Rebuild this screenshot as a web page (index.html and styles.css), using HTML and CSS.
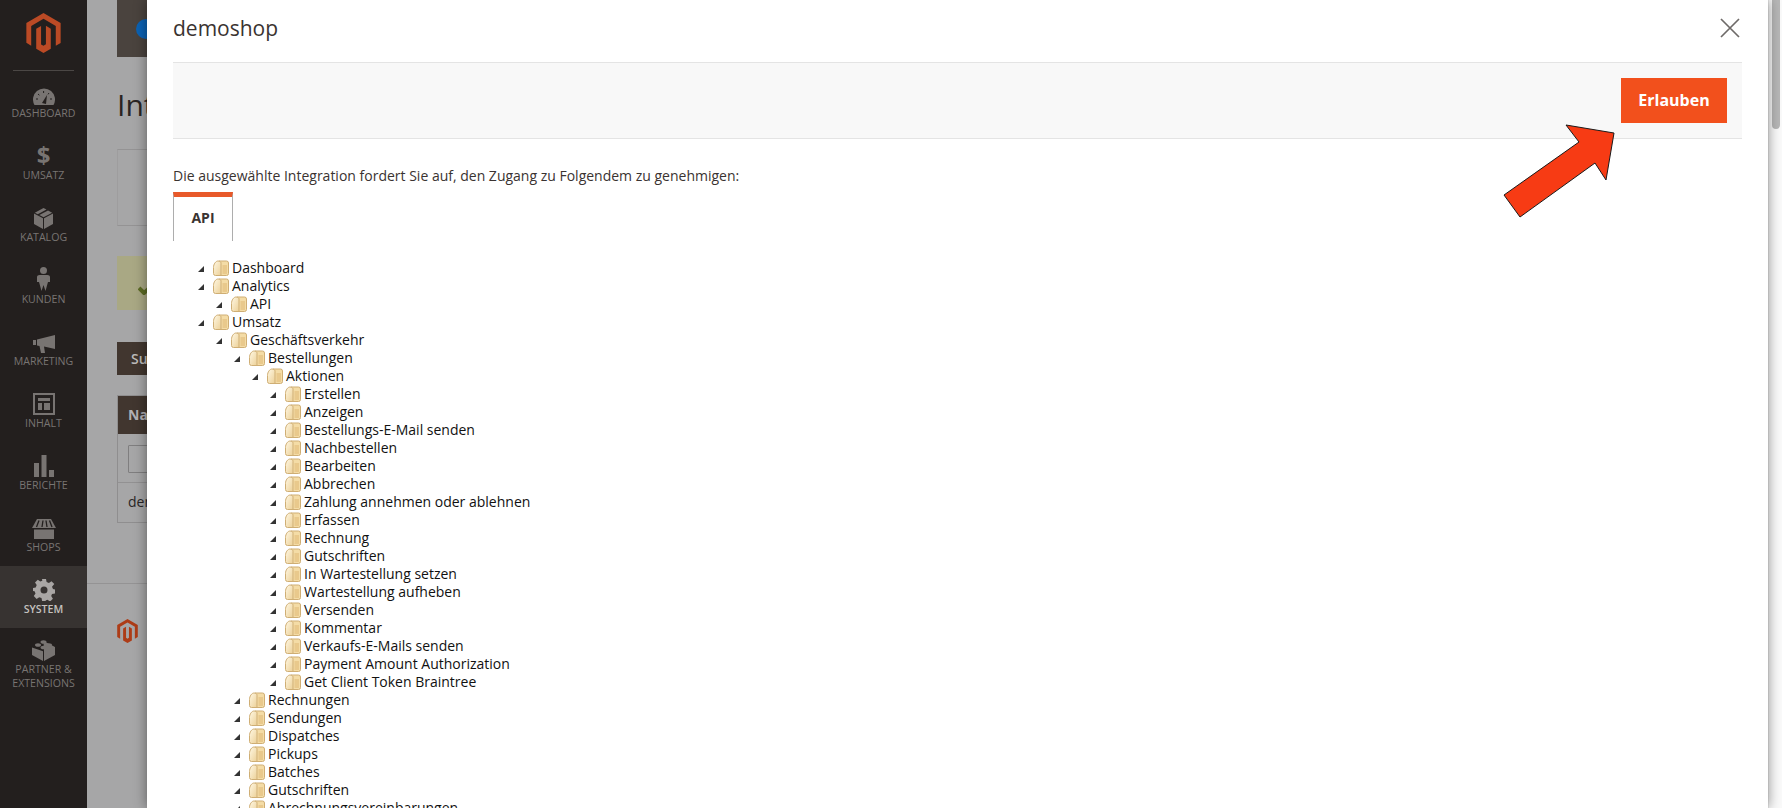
FILE: index.html
```html
<!DOCTYPE html>
<html lang="de">
<head>
<meta charset="utf-8">
<title>demoshop</title>
<link rel="stylesheet" href="styles.css">
</head>
<body>
<svg class="defs" aria-hidden="true">
  <defs>
    <linearGradient id="fold" x1="0" y1="0" x2="1" y2="1">
      <stop offset="0" stop-color="#fff8e4"/>
      <stop offset="1" stop-color="#ecd097"/>
    </linearGradient>
    <symbol id="folder" viewBox="0 0 16 16">
      <path d="M6 1h7.500a2 2 0 0 1 2 2v10.500a2 2 0 0 1-2 2H6z" fill="#f4dca6" stroke="#cfae74"/>
      <path d="M5 1c1.700 0 3 .7 3 2.200V15.500H2.500a2 2 0 0 1-2-2V7.500C.5 4 2.800 1 5 1z" fill="url(#fold)" stroke="#cfae74"/>
      <path d="M9.500 5h4.500v9H9.500z" fill="#e9c98c"/>
    </symbol>
    <symbol id="arrow" viewBox="0 0 6 6">
      <path d="M6 0v6H0z" fill="#333"/>
    </symbol>
  </defs>
</svg>
<div class="app">
  <nav class="sidebar">
    <div class="logo">
      <svg width="35" height="40" viewBox="0 0 24 28"><path class="brand" d="M12 0L0 7v13.900l3.400 2V9.100l8.600-5 8.600 5v13.900l3.400-2V7z"/><path class="brand" d="M13.700 21.900 12 23l-1.700-1V9.100L6.900 11v14.100L12 28l5.100-2.900V11l-3.400-2z"/></svg>
    </div>
    <a class="item">
      <span class="icon"><svg width="22" height="17" viewBox="0 0 22 17"><path d="M1.500 17A11 11 0 1 1 20.500 17z"/><path class="cut" d="M9 15l5-8-1 9z"/><path class="cut" d="M3 11h2M5 6l1.400 1.200M10.600 3v2M16 5l-1 1.400M19 11h-2" stroke="#231f1e" stroke-width="1"/></svg></span>
      <span class="label">Dashboard</span>
    </a>
    <a class="item">
      <span class="icon"><span class="dollar">$</span></span>
      <span class="label">Umsatz</span>
    </a>
    <a class="item">
      <span class="icon"><svg width="19" height="21" viewBox="0 0 19 21"><path d="M9 10.200V21L0 16V5.600z"/><path d="M10 10.200V21l9-5V5.600z"/><path d="M9.500 0l3 1.600L3.800 6.300 .8 4.700z"/><path d="M14 2.400l4.200 2.300-8.700 4.600-4.200-2.300z"/></svg></span>
      <span class="label">Katalog</span>
    </a>
    <a class="item">
      <span class="icon"><svg width="13" height="24" viewBox="0 0 13 24"><circle cx="6.500" cy="3.500" r="3.500"/><path d="M2.500 8h8c1.300 0 2.500.8 2.500 2v5h-2l-1 3.500L8.500 24l-2-6-2 6-1.500-5.500L2 15H0v-5c0-1.200 1.200-2 2.500-2z"/></svg></span>
      <span class="label">Kunden</span>
    </a>
    <a class="item">
      <span class="icon"><svg width="22" height="18" viewBox="0 0 22 18"><path d="M0 5h3v5H0z"/><path d="M4 4.500L22 0v14L11 11.600l1 6.400H8L6.500 11 4 10.500z"/></svg></span>
      <span class="label">Marketing</span>
    </a>
    <a class="item">
      <span class="icon"><svg width="22" height="22" viewBox="0 0 22 22"><path fill-rule="evenodd" d="M0 0h22v22H0zM2 2v18h18V2z"/><path d="M5 5h12v3H5zM5 10h4v7H5zM11 10h6v7h-6z"/></svg></span>
      <span class="label">Inhalt</span>
    </a>
    <a class="item">
      <span class="icon"><svg width="20" height="22" viewBox="0 0 20 22"><path d="M0 8h5v14H0zM7.500 0h5v22h-5zM15 15h5v7h-5z"/></svg></span>
      <span class="label">Berichte</span>
    </a>
    <a class="item">
      <span class="icon"><svg width="24" height="20" viewBox="0 0 24 20"><path d="M5 0h14l5 9H0z"/><path class="cut" d="M7 1.500L4.500 8M11 1.500 10 8M14 1.500 15 8M17.500 1.500 20 8" stroke="#231f1e" stroke-width="1.300" fill="none"/><path d="M2 10.500h20V20H2z"/></svg></span>
      <span class="label">Shops</span>
    </a>
    <a class="item active">
      <span class="icon"><svg width="22" height="22" viewBox="0 0 22 22"><path fill-rule="evenodd" d="M9 0h4l.6 3 2.300 1 2.600-1.700 2.800 2.800L19 7.700l1 2.300 2 .6v4l-3 .5-.8 2 1.700 2.600-2.800 2.800-2.600-1.700-2 .8L12.900 22H9.100l-.6-2.900-2.300-.9-2.600 1.700-2.800-2.800L2.500 14.500l-.9-2.200L0 12V9l2.700-.6 1-2.300L2 3.500 4.800.8l2.500 1.700 2-.8zM11 7.500a3.500 3.500 0 1 0 0 7 3.500 3.500 0 0 0 0-7z"/></svg></span>
      <span class="label">System</span>
    </a>
    <a class="item">
      <span class="icon"><svg width="23" height="22" viewBox="0 0 23 22"><path d="M11.500 2L23 8v8l-11 6V12zM0 8.500l11 3.700V22L0 16z"/><ellipse cx="11.500" cy="3" rx="3" ry="1.800"/><ellipse cx="6" cy="6" rx="3" ry="1.800"/><ellipse cx="17" cy="6" rx="3" ry="1.800"/><ellipse cx="11.500" cy="8.500" rx="3" ry="1.800"/></svg></span>
      <span class="label">Partner &amp; Extensions</span>
    </a>
  </nav>

  <main class="page">
    <div class="topbar"><span class="avatar"></span></div>
    <h1 class="page-title">Integrationen</h1>
    <div class="gridbox"></div>
    <div class="notice"><svg width="18" height="14" viewBox="0 0 18 14"><path d="M1 7l5 5L17 2" fill="none" stroke="#5c6b24" stroke-width="4"/></svg></div>
    <div class="dark-button">Suchen</div>
    <div class="table">
      <div class="thead">Name</div>
      <div class="tfilter"><span class="tinput"></span></div>
      <div class="trow">demoshop</div>
    </div>
    <footer class="page-foot">
      <svg width="21" height="24" viewBox="0 0 24 28"><path class="brand-foot" d="M12 0L0 7v13.900l3.400 2V9.100l8.600-5 8.600 5v13.900l3.400-2V7z"/><path class="brand-foot" d="M13.700 21.900 12 23l-1.700-1V9.100L6.900 11v14.100L12 28l5.100-2.900V11l-3.400-2z"/></svg>
    </footer>
  </main>

  <div class="scrollbar"><span class="thumb"></span></div>
</div>

<section class="modal">
  <header class="modal-head">
    <h2 class="modal-title">demoshop</h2>
    <svg class="close" width="20" height="20" viewBox="0 0 20 20"><path d="M1 1l18 18M19 1L1 19" stroke="#6e6a68" stroke-width="1.700" fill="none"/></svg>
  </header>
  <div class="actions"><button class="allow">Erlauben</button></div>
  <p class="intro">Die ausgewählte Integration fordert Sie auf, den Zugang zu Folgendem zu genehmigen:</p>
  <div class="tabs"><span class="tab">API</span></div>
  <div class="tree">
    <ul>
      <li><div class="node"><svg class="tri"><use href="#arrow"/></svg><svg class="fld"><use href="#folder"/></svg>Dashboard</div></li>
      <li><div class="node"><svg class="tri"><use href="#arrow"/></svg><svg class="fld"><use href="#folder"/></svg>Analytics</div>
        <ul><li><div class="node"><svg class="tri"><use href="#arrow"/></svg><svg class="fld"><use href="#folder"/></svg>API</div></li></ul>
      </li>
      <li><div class="node"><svg class="tri"><use href="#arrow"/></svg><svg class="fld"><use href="#folder"/></svg>Umsatz</div>
        <ul><li><div class="node"><svg class="tri"><use href="#arrow"/></svg><svg class="fld"><use href="#folder"/></svg>Geschäftsverkehr</div>
          <ul>
            <li><div class="node"><svg class="tri"><use href="#arrow"/></svg><svg class="fld"><use href="#folder"/></svg>Bestellungen</div>
              <ul><li><div class="node"><svg class="tri"><use href="#arrow"/></svg><svg class="fld"><use href="#folder"/></svg>Aktionen</div>
                <ul>
                  <li><div class="node"><svg class="tri"><use href="#arrow"/></svg><svg class="fld"><use href="#folder"/></svg>Erstellen</div></li>
                  <li><div class="node"><svg class="tri"><use href="#arrow"/></svg><svg class="fld"><use href="#folder"/></svg>Anzeigen</div></li>
                  <li><div class="node"><svg class="tri"><use href="#arrow"/></svg><svg class="fld"><use href="#folder"/></svg>Bestellungs-E-Mail senden</div></li>
                  <li><div class="node"><svg class="tri"><use href="#arrow"/></svg><svg class="fld"><use href="#folder"/></svg>Nachbestellen</div></li>
                  <li><div class="node"><svg class="tri"><use href="#arrow"/></svg><svg class="fld"><use href="#folder"/></svg>Bearbeiten</div></li>
                  <li><div class="node"><svg class="tri"><use href="#arrow"/></svg><svg class="fld"><use href="#folder"/></svg>Abbrechen</div></li>
                  <li><div class="node"><svg class="tri"><use href="#arrow"/></svg><svg class="fld"><use href="#folder"/></svg>Zahlung annehmen oder ablehnen</div></li>
                  <li><div class="node"><svg class="tri"><use href="#arrow"/></svg><svg class="fld"><use href="#folder"/></svg>Erfassen</div></li>
                  <li><div class="node"><svg class="tri"><use href="#arrow"/></svg><svg class="fld"><use href="#folder"/></svg>Rechnung</div></li>
                  <li><div class="node"><svg class="tri"><use href="#arrow"/></svg><svg class="fld"><use href="#folder"/></svg>Gutschriften</div></li>
                  <li><div class="node"><svg class="tri"><use href="#arrow"/></svg><svg class="fld"><use href="#folder"/></svg>In Wartestellung setzen</div></li>
                  <li><div class="node"><svg class="tri"><use href="#arrow"/></svg><svg class="fld"><use href="#folder"/></svg>Wartestellung aufheben</div></li>
                  <li><div class="node"><svg class="tri"><use href="#arrow"/></svg><svg class="fld"><use href="#folder"/></svg>Versenden</div></li>
                  <li><div class="node"><svg class="tri"><use href="#arrow"/></svg><svg class="fld"><use href="#folder"/></svg>Kommentar</div></li>
                  <li><div class="node"><svg class="tri"><use href="#arrow"/></svg><svg class="fld"><use href="#folder"/></svg>Verkaufs-E-Mails senden</div></li>
                  <li><div class="node"><svg class="tri"><use href="#arrow"/></svg><svg class="fld"><use href="#folder"/></svg>Payment Amount Authorization</div></li>
                  <li><div class="node"><svg class="tri"><use href="#arrow"/></svg><svg class="fld"><use href="#folder"/></svg>Get Client Token Braintree</div></li>
                </ul>
              </li></ul>
            </li>
            <li><div class="node"><svg class="tri"><use href="#arrow"/></svg><svg class="fld"><use href="#folder"/></svg>Rechnungen</div></li>
            <li><div class="node"><svg class="tri"><use href="#arrow"/></svg><svg class="fld"><use href="#folder"/></svg>Sendungen</div></li>
            <li><div class="node"><svg class="tri"><use href="#arrow"/></svg><svg class="fld"><use href="#folder"/></svg>Dispatches</div></li>
            <li><div class="node"><svg class="tri"><use href="#arrow"/></svg><svg class="fld"><use href="#folder"/></svg>Pickups</div></li>
            <li><div class="node"><svg class="tri"><use href="#arrow"/></svg><svg class="fld"><use href="#folder"/></svg>Batches</div></li>
            <li><div class="node"><svg class="tri"><use href="#arrow"/></svg><svg class="fld"><use href="#folder"/></svg>Gutschriften</div></li>
            <li><div class="node"><svg class="tri"><use href="#arrow"/></svg><svg class="fld"><use href="#folder"/></svg>Abrechnungsvereinbarungen</div></li>
          </ul>
        </li></ul>
      </li>
    </ul>
  </div>
  <svg class="callout" width="114" height="96" viewBox="0 0 114 96"><path d="M111 10L63 2l13 17L1 72l16 22 75-54 11 17z" fill="#f73b14" stroke="#1a1a1a" stroke-width="1"/></svg>
</section>
</body>
</html>
```

FILE: styles.css
```css
* { box-sizing: border-box; }
html, body { margin: 0; height: 808px; overflow: hidden; }
body { font-family: "Open Sans", "Noto Sans", sans-serif; background: #a6a6a7; color: #2b2626; }
h1, h2, p, ul { margin: 0; padding: 0; }
ul { list-style: none; }
.defs { width: 0; height: 0; display: block; }

.app { display: flex; height: 808px; }

.sidebar { width: 87px; flex: none; background: #231f1e; display: flex; flex-direction: column; }
.logo { height: 71px; margin: 0 13px -1px; padding-top: 13px; border-bottom: 1px solid #4b4745; display: flex; justify-content: center; align-items: flex-start; }
.brand { fill: #bb4a25; }
.item { height: 62px; padding-top: 5px; display: flex; flex-direction: column; align-items: center; color: #787472; }
.item svg { fill: #787472; display: block; }
.item .cut { fill: #231f1e; }
.icon { height: 30px; display: flex; align-items: flex-end; justify-content: center; }
.dollar { font-size: 24px; line-height: 24px; font-weight: 700; color: #787472; }
.label { margin-top: 1px; font-size: 10.600px; line-height: 14px; text-transform: uppercase; text-align: center; }
.item.active { background: #373331; color: #c4c1bf; }
.item.active svg { fill: #a9a6a4; }
.item.active .label { font-weight: 600; }

.page { flex: 1; min-width: 0; padding-left: 30px; }
.topbar { height: 57px; background: #4a433e; padding-left: 19px; display: flex; align-items: center; }
.avatar { width: 20px; height: 20px; border-radius: 50%; background: #0b62b4; }
.page-title { margin-top: 28px; font-size: 30px; line-height: 40px; font-weight: 400; color: #2a2423; }
.gridbox { margin-top: 24px; height: 77px; border: 1px solid #949394; border-right: 0; border-left-color: #9e9d9e; }
.notice { margin-top: 30px; height: 54px; background: #a9a884; padding: 22px 0 0 21px; }
.dark-button { margin-top: 32px; height: 33px; width: 120px; background: #41362f; color: #bdbbba; font-size: 14px; font-weight: 600; line-height: 33px; padding-left: 14px; }
.table { margin-top: 20px; border: 1px solid #8f8e8f; border-right: 0; font-size: 14px; }
.thead { height: 38px; background: #41362f; color: #b2b0b4; font-weight: 700; line-height: 38px; padding-left: 10px; }
.tfilter { height: 49px; padding: 11px 0 0 10px; border-bottom: 1px solid #929192; }
.tinput { display: block; height: 28px; border: 1px solid #7f7e7f; border-radius: 1px; }
.trow { height: 39px; line-height: 38px; padding-left: 10px; color: #2a2626; }
.page-foot { margin: 60px 0 0 -30px; padding: 35px 0 0 30px; border-top: 1px solid #949394; }
.brand-foot { fill: #ad3c17; }

.scrollbar { width: 14px; flex: none; background: #fafafa; border-left: 1px solid #ebebeb; padding-left: 3px; }
.thumb { display: block; width: 8px; height: 129px; background: #b7b7b7; border-radius: 0 0 4px 4px; }

.modal { position: absolute; top: 0; bottom: 0; left: 147px; right: 14px; padding: 0 26px; background: #fff; overflow: hidden; box-shadow: 0 0 12px rgba(0,0,0,.45); }
.modal-head { height: 62px; display: flex; justify-content: space-between; align-items: center; padding: 0 2px 6px 0; }
.modal-title { font-size: 21px; font-weight: 400; line-height: 28px; color: #3a3331; }
.actions { height: 77px; padding: 15px 15px 0 0; background: #f8f8f8; border-top: 1px solid #e4e4e4; border-bottom: 1px solid #e4e4e4; display: flex; justify-content: flex-end; align-items: flex-start; }
.allow { width: 106px; height: 45px; border: 0; padding: 0 0 2px; background: #f2501c; color: #fff; font: 700 16px "Open Sans", sans-serif; }
.intro { margin-top: 27px; font-size: 14px; line-height: 20px; color: #3a3331; }
.tabs { margin-top: 6px; height: 49px; display: flex; }
.tab { width: 60px; border: 1px solid #adadad; border-top: 5px solid #e8592a; border-bottom: 0; font-size: 14px; font-weight: 700; line-height: 42px; text-align: center; color: #3a3331; }

.tree { margin-top: 18px; padding-left: 25px; font-size: 14px; line-height: 18px; color: #111; }
.tree ul ul { padding-left: 18px; }
.node { height: 18px; display: flex; align-items: center; white-space: nowrap; }
.tri { width: 6px; height: 6px; flex: none; margin: 2px 9px 0 0; }
.fld { width: 16px; height: 16px; flex: none; margin-right: 3px; }

.callout { position: absolute; left: 1356px; top: 123px; }
```
